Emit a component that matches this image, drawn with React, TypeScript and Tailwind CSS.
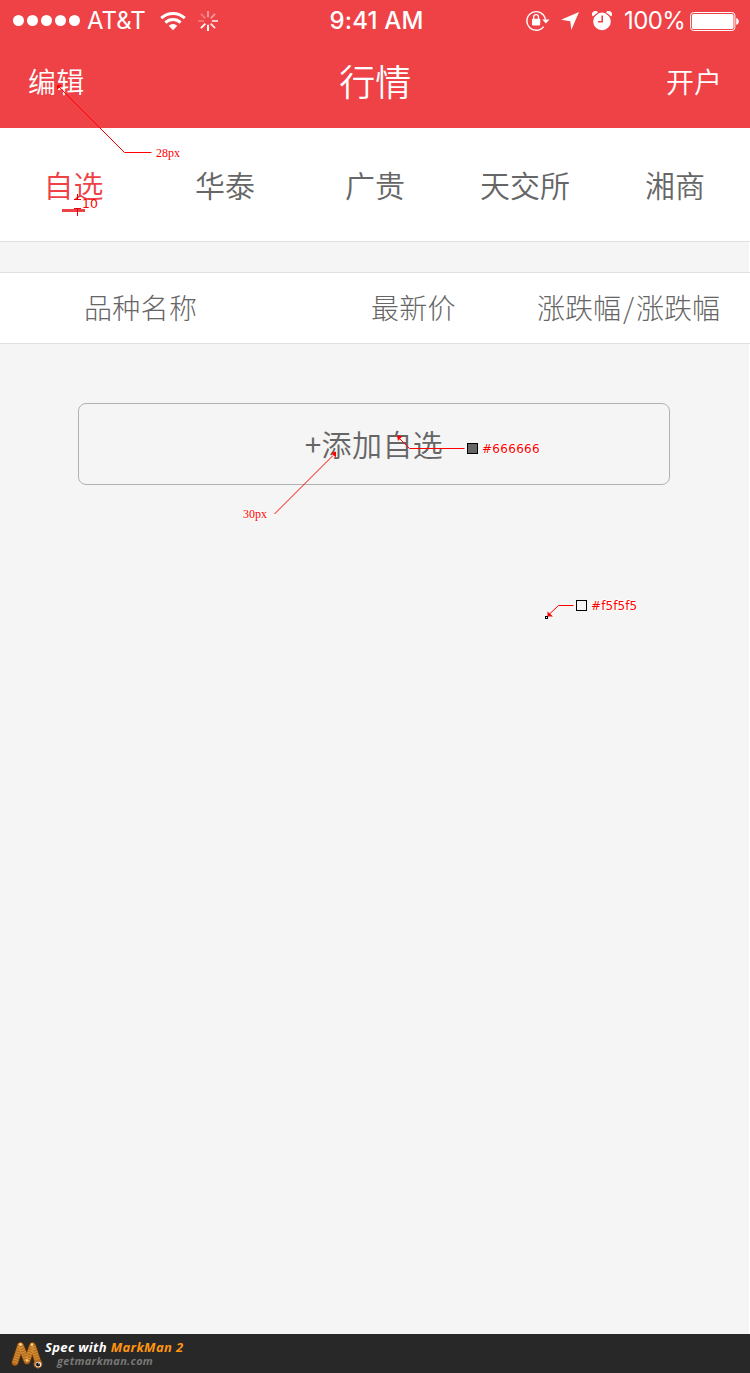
import React from "react";

const tabs = ["自选", "华泰", "广贵", "天交所", "湘商"];
const rays = [0.45, 0.45, 0.75, 0.85, 1, 1, 0.25, 0.3];
const halo =
  "[text-shadow:1px_0_#fff,-1px_0_#fff,0_1px_#fff,0_-1px_#fff]";

function Wifi() {
  return (
    <svg className="h-[20px] w-[26px]" viewBox="0 0 26 20" fill="none" stroke="#fff" strokeWidth="3">
      <path d="M1.2 7.2a17 17 0 0 1 23.6 0" />
      <path d="M5.4 11.6a11 11 0 0 1 15.2 0" />
      <path d="M13 19.2l-4.3-4.4a6.2 6.2 0 0 1 8.6 0z" fill="#fff" stroke="none" />
    </svg>
  );
}

function Spinner() {
  return (
    <svg className="h-[20px] w-[20px]" viewBox="0 0 20 20" stroke="#fff" strokeWidth="1.9">
      {rays.map((o, i) => (
        <line key={i} x1="10" y1="0" x2="10" y2="6.2" opacity={o} transform={`rotate(${i * 45} 10 10)`} />
      ))}
    </svg>
  );
}

function RotationLock() {
  return (
    <svg className="h-[22px] w-[24px]" viewBox="0 0 24 22" fill="none" stroke="#fff">
      <path d="M17.6 16.6A9.3 9.3 0 1 1 19.4 9.6" strokeWidth="1.4" />
      <path d="M16.3 9.4h7.200l-3.600 4.200z" fill="#fff" stroke="none" />
      <rect x="6" y="8.800" width="8.2" height="6.6" rx="0.8" fill="#fff" stroke="none" />
      <path d="M7.7 9.2V7a2.4 2.4 0 0 1 4.8 0v2.2" strokeWidth="1.3" />
    </svg>
  );
}

function Alarm() {
  return (
    <svg className="h-[20px] w-[20px]" viewBox="0 0 20 20" fill="#fff">
      <circle cx="10" cy="10.4" r="8.800" />
      <path d="M0.900 5.600A3.300 3.300 0 1 1 6 1.200z M19.100 5.600A3.300 3.300 0 1 0 14 1.200z" />
      <path d="M1.300 6.300L6.600 1.700M18.700 6.300L13.400 1.700" stroke="#ee4247" strokeWidth="1" />
      <path d="M10.2 4.600v6.200H6" fill="none" stroke="#ee4247" strokeWidth="1.6" />
    </svg>
  );
}

function Battery() {
  return (
    <svg className="h-[20px] w-[50px]" viewBox="0 0 50 20">
      <rect x="0.6" y="1.5" width="44.3" height="18" rx="3" fill="none" stroke="#fff" strokeWidth="1" />
      <rect x="2" y="2.900" width="41.5" height="15.2" rx="1.6" fill="#fff" />
      <path d="M46.2 7v6.8c1.6-.5 2.6-1.8 2.6-3.4S47.800 7.500 46.200 7z" fill="#fff" />
    </svg>
  );
}

function Mascot() {
  return (
    <svg className="h-[30px] w-[34px]" viewBox="0 0 34 30" fill="none" strokeLinecap="round" strokeLinejoin="round">
      <path d="M4 22.500L9.500 5.500L16 21L21.500 5.500L27 22" stroke="#5f3007" strokeWidth="7.400" />
      <path d="M4 22.500L9.500 5.500L16 21L21.500 5.500L27 22" stroke="#b46c1d" strokeWidth="6" />
      <path d="M4 22.500L9.500 5.500L16 21L21.500 5.500L27 22" stroke="#d9943c" strokeWidth="5.200" strokeLinecap="butt" strokeDasharray="1 1.500" />
      <circle cx="9.500" cy="4.500" r="1.200" fill="#ffe2a0" />
      <circle cx="21" cy="4.500" r="1.200" fill="#ffe2a0" />
      <circle cx="16" cy="20.500" r="1.200" fill="#ffd080" />
      <circle cx="27" cy="24" r="4.400" fill="#b46c1d" />
      <circle cx="27.300" cy="24.500" r="2.800" fill="#fff" />
      <circle cx="27.100" cy="24.500" r="2.100" fill="#111" />
      <circle cx="28" cy="23.700" r="0.700" fill="#fff" />
    </svg>
  );
}

function Annotations() {
  return (
    <div className="pointer-events-none absolute inset-0 text-[#f00]">
      <svg className="absolute inset-0 h-full w-full" viewBox="0 0 750 1373" fill="none" stroke="#f00" strokeWidth="1">
        <path d="M59 87L124.500 152.500H151.500" />
        <path d="M57 85h5l-5 5z" fill="#f00" stroke="none" />
        <path d="M74 199.500h7M74 208.500h7M77.500 194v5M77.500 209v7" stroke="#e6000a" />
        <path d="M400 439L409.500 448.500H464.500" />
        <path d="M397 435.500l5.500 0.500-4.500 5z" fill="#f00" stroke="none" />
        <path d="M274.500 514L333 455.500" />
        <path d="M336 451.500v6l-5-4.500z" fill="#f00" stroke="none" />
        <path d="M573.500 605.500H558.500L549 614.500" />
        <path d="M547.500 611.500v5h5.500z" fill="#f00" stroke="none" />
        <rect x="545.500" y="616.500" width="2" height="2" stroke="#000" fill="#fff" />
        <rect x="467.500" y="443.500" width="10" height="10" stroke="#000" fill="#666" />
        <rect x="576.500" y="600.500" width="10" height="10" stroke="#000" fill="#f5f5f5" />
      </svg>
      <span className="absolute left-[156px] top-[146px] font-['Liberation_Serif',serif] text-[12px] leading-[14px]">28px</span>
      <span className="absolute left-[82px] top-[197px] font-['DejaVu_Sans',sans-serif] text-[12.5px] leading-[14px]">10</span>
      <span className={`absolute left-[243px] top-[507px] font-['Liberation_Serif',serif] text-[12px] leading-[14px] ${halo}`}>30px</span>
      <span className={`absolute left-[482px] top-[442px] font-['DejaVu_Sans',sans-serif] text-[12px] leading-[14px] tracking-[0.3px] ${halo}`}>#666666</span>
      <span className={`absolute left-[591px] top-[599px] font-['DejaVu_Sans',sans-serif] text-[12px] leading-[14px] tracking-[0.1px] ${halo}`}>#f5f5f5</span>
    </div>
  );
}

export default function App() {
  return (
    <div className="relative flex h-[1373px] w-[750px] flex-col overflow-hidden bg-[#f5f5f5] font-['Noto_Sans_CJK_SC',sans-serif] text-[#666]">
      <header className="h-[128px] shrink-0 bg-[#ee4247] text-white">
        <div className="grid h-10 grid-cols-3 items-center pl-[13px] pr-[10px] font-['Inter',sans-serif] text-[24px]">
          <div className="flex items-center">
            <div className="flex gap-[3px]">
              {[0, 1, 2, 3, 4].map((i) => (
                <span key={i} className="size-[11px] rounded-full bg-white" />
              ))}
            </div>
            <span className="ml-[7px] w-[73px] pt-[1px] leading-[40px]">AT&amp;T</span>
            <Wifi />
            <span className="ml-[12px]"><Spinner /></span>
          </div>
          <span className="pt-[1px] text-center font-medium leading-[40px] tracking-[0.2px]">9:41 AM</span>
          <div className="flex items-center justify-end">
            <RotationLock />
            <svg className="ml-[11px] size-[18px]" viewBox="0 0 18 18" fill="#fff">
              <path d="M18 0L10.300 18L9.300 9.300L0 7.800z" />
            </svg>
            <span className="ml-[13px]"><Alarm /></span>
            <span className="ml-[12px] w-[66px] pt-[1px] leading-[40px] tracking-[-0.6px]">100%</span>
            <Battery />
          </div>
        </div>
        <div className="flex h-[81px] items-center justify-between pl-[28px] pr-[28px] text-[28px] font-[350] leading-[40px]">
          <span className="tracking-[0.3px]">编辑</span>
          <span className="pb-[2px] text-[36px]">行情</span>
          <span>开户</span>
        </div>
      </header>

      <nav className="grid h-[114px] shrink-0 grid-cols-5 border-b border-[#e1e1e1] bg-white text-[30px] font-[350] leading-[40px]">
        {tabs.map((t, i) => (
          <div key={t} className="flex flex-col items-center pt-[36px]">
            <span className={i === 0 ? "mr-[3px] text-[#ee4247]" : ""}>{t}</span>
            {i === 0 && <span className="mr-[3px] mt-[5px] h-[3px] w-[23px] bg-[#ee4247]" />}
          </div>
        ))}
      </nav>
      <div className="h-[30px] shrink-0 border-r border-white" />

      <div className="flex h-[72px] shrink-0 items-center border-y border-[#e1e1e1] bg-white pb-[2px] pl-[84px] text-[28px] font-light leading-[40px]">
        <span className="w-[287px] tracking-[0.3px]">品种名称</span>
        <span className="w-[166px] tracking-[0.3px]">最新价</span>
        <span>
          涨跌幅<span className="px-[2px]">/</span>涨跌幅
        </span>
      </div>

      <main className="flex-1 border-r border-white pl-[78px] pt-[59px]">
        <button className="block h-[82px] w-[592px] rounded-[8px] border border-[#b2b2b2] pb-[2px] text-[30px] font-[350] leading-[40px] tracking-[0.4px]">
          +添加自选
        </button>
      </main>

      <footer className="flex h-[39px] shrink-0 items-start bg-[#282828] pl-[11px] pt-[6px] font-['Open_Sans',sans-serif] font-bold italic">
        <Mascot />
        <div className="flex flex-col">
          <span className="whitespace-nowrap text-[13px] leading-[15px] tracking-[0.35px] text-white">
            Spec with <span className="text-[#ff9410]">MarkMan 2</span>
          </span>
          <span className="pl-[12px] text-[11px] leading-[12px] tracking-[0.3px] text-[#777]">getmarkman.com</span>
        </div>
      </footer>

      <Annotations />
    </div>
  );
}
